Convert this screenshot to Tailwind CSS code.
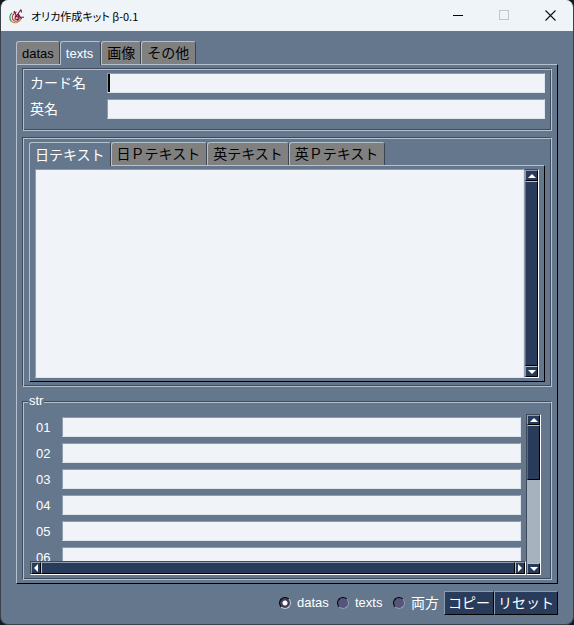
<!DOCTYPE html>
<html lang="ja">
<head>
<meta charset="utf-8">
<title>オリカ作成キット β-0.1</title>
<script src="https://cdn.jsdelivr.net/npm/@tailwindcss/browser@4"></script>
</head>
<body class="bg-[#16181c] font-['Liberation_Sans','Noto_Sans_CJK_JP',sans-serif] text-[13px] leading-5 text-white">
<div class="flex min-h-screen flex-col overflow-hidden rounded-lg border border-t-0 border-[#3c4149] bg-[#64778d]">

  <header class="flex h-[31px] shrink-0 items-center bg-[#eff4f9] pl-2 text-black">
    <svg class="h-4 w-4" viewBox="0 0 16 16" fill="none" aria-hidden="true">
      <path d="M3 5C.5 7 0 11 2.500 13.500" stroke="#3f9a58" stroke-width="1.200"/>
      <path d="M2.500 13.500C6 16 11 14.500 12 10.500" stroke="#c98746" stroke-width="1.100"/>
      <path d="M5.500 5.500C3 7 2.500 10.500 4.500 12.300S10 13 10.500 10" stroke="#b23a3c" stroke-width="1.100"/>
      <path d="M5 3l2.500 5L12 1.500M4.500 5l3-1M6 8.500l9 .8M9 5.500l3.500 5.500M12 1.500l.5 3M6.500 7.500L6 11l3 .5L9.500 7" stroke="#7d1230" stroke-width="1.100"/>
    </svg>
    <h1 class="ml-[6px] flex-1 font-['Noto_Sans_CJK_JP',sans-serif] text-[11px] font-normal [font-feature-settings:'palt']">オリカ作成キット β-0.1</h1>
    <button aria-label="最小化" class="flex h-full w-[46px] items-center justify-center"><svg class="h-[11px] w-[11px]" viewBox="0 0 11 11"><path d="M0 5.500h10" stroke="#000"/></svg></button>
    <button aria-label="最大化" disabled class="flex h-full w-[46px] items-center justify-center"><svg class="h-[11px] w-[11px]" viewBox="0 0 11 11" fill="none"><rect x=".5" y=".5" width="9" height="9" stroke="#c3c7cb"/></svg></button>
    <button aria-label="閉じる" class="flex h-full w-[46px] items-center justify-center"><svg class="h-[11px] w-[11px]" viewBox="0 0 11 11"><path d="M.5.5l10 10M10.500.5l-10 10" stroke="#111" stroke-width="1.100"/></svg></button>
  </header>

  <main class="flex flex-1 flex-col px-[15px] pt-[10px] pb-[9px]">
    <nav role="tablist" class="flex h-[23px]">
      <button role="tab" class="rounded-t-[3px] border-t border-r border-l border-t-[#b5c1cf] border-r-[#3a4554] border-l-[#b5c1cf] bg-[#808080] px-[5px] pt-[2px] text-black">datas</button>
      <button role="tab" aria-selected="true" class="relative -mb-px rounded-t-[3px] border-t border-r border-l border-t-[#b5c1cf] border-r-[#3a4554] border-l-[#b5c1cf] bg-[#64778d] pr-[7px] pl-[5px]">texts</button>
      <button role="tab" class="rounded-t-[3px] border-t border-r border-l border-t-[#b5c1cf] border-r-[#3a4554] border-l-[#b5c1cf] bg-[#808080] pr-[5px] pl-[5px] text-[14px] text-black">画像</button>
      <button role="tab" class="rounded-t-[3px] border-t border-r border-l border-t-[#b5c1cf] border-r-[#3a4554] border-l-[#b5c1cf] bg-[#808080] pr-[6px] pl-[5px] text-[14px] text-black">その他</button>
    </nav>

    <section role="tabpanel" class="flex flex-1 flex-col border border-t-[#b5c1cf] border-r-black border-b-black border-l-[#b5c1cf] px-[5px] pt-[3px] pb-[3px]">
      <div class="flex flex-col gap-[6px] border border-t-[#3f4b5b] border-r-[#b5c1cf] border-b-[#b5c1cf] border-l-[#3f4b5b] pt-1 pr-[6px] pb-[11px] pl-[7px] shadow-[inset_1px_1px_#b5c1cf,inset_-1px_-1px_#3f4b5b]">
        <div class="flex h-5 items-center">
          <label for="card" class="w-[77px] text-[14px]">カード名</label>
          <input id="card" autofocus class="h-5 min-w-0 flex-1 border border-t-[#8f9cac] border-r-[#dfe5ec] border-b-[#dfe5ec] border-l-[#8f9cac] bg-[#f0f3f7] text-black caret-transparent shadow-[inset_2px_0_#000] outline-none">
        </div>
        <div class="flex h-5 items-center">
          <label for="eng" class="w-[77px] text-[14px]">英名</label>
          <input id="eng" class="h-5 min-w-0 flex-1 border border-t-[#8f9cac] border-r-[#dfe5ec] border-b-[#dfe5ec] border-l-[#8f9cac] bg-[#f0f3f7] text-black outline-none">
        </div>
      </div>

      <div class="mt-[6px] flex flex-1 flex-col border border-t-[#3f4b5b] border-r-[#b5c1cf] border-b-[#b5c1cf] border-l-[#3f4b5b] px-[6px] pt-1 pb-1 shadow-[inset_1px_1px_#b5c1cf,inset_-1px_-1px_#3f4b5b]">
        <nav role="tablist" class="flex h-[23px] text-[14px]">
          <button role="tab" aria-selected="true" class="relative -mb-px rounded-t-[3px] border-t border-r border-l border-t-[#b5c1cf] border-r-[#3a4554] border-l-[#b5c1cf] bg-[#64778d] px-[5px]">日テキスト</button>
          <button role="tab" class="rounded-t-[3px] border-t border-r border-l border-t-[#b5c1cf] border-r-[#3a4554] border-l-[#b5c1cf] bg-[#808080] pr-[6px] pl-[5px] text-black">日Ｐテキスト</button>
          <button role="tab" class="rounded-t-[3px] border-t border-r border-l border-t-[#b5c1cf] border-r-[#3a4554] border-l-[#b5c1cf] bg-[#808080] px-[5px] text-black">英テキスト</button>
          <button role="tab" class="rounded-t-[3px] border-t border-r border-l border-t-[#b5c1cf] border-r-[#3a4554] border-l-[#b5c1cf] bg-[#808080] pr-[6px] pl-[5px] text-black">英Ｐテキスト</button>
        </nav>
        <div role="tabpanel" class="flex flex-1 border border-t-[#b5c1cf] border-r-black border-b-black border-l-[#b5c1cf] p-[5px] pt-[3px] pb-[3px]">
          <textarea aria-label="日テキスト" class="min-h-[120px] min-w-0 flex-1 resize-none border border-t-[#8f9cac] border-r-[#dfe5ec] border-b-[#dfe5ec] border-l-[#8f9cac] bg-[#f0f3f7] text-black outline-none"></textarea>
          <div class="flex w-[15px] flex-col border border-t-[#3f4b5b] border-r-white border-b-white border-l-[#8f9cac] bg-[#283b5b]">
            <button aria-label="上へ" class="flex h-[11px] items-center justify-center border border-t-[#8f9cac] border-r-black border-b-black border-l-[#8f9cac]"><svg class="h-1 w-2" viewBox="0 0 8 4"><path d="M0 4L4 0l4 4z" fill="#fff"/></svg></button>
            <div class="flex-1 border border-t-[#b5c1cf] border-r-black border-b-black border-l-[#5a6b82]"></div>
            <button aria-label="下へ" class="flex h-[11px] items-center justify-center border border-t-[#b5c1cf] border-r-black border-b-black border-l-[#8f9cac]"><svg class="h-1 w-2" viewBox="0 0 8 4"><path d="M0 0h8L4 4z" fill="#fff"/></svg></button>
          </div>
        </div>
      </div>

      <fieldset class="mt-[6px] min-w-0 border border-t-[#3f4b5b] border-r-[#b5c1cf] border-b-[#b5c1cf] border-l-[#3f4b5b] pr-[10px] pb-1 pl-[7px] shadow-[inset_1px_1px_#b5c1cf,inset_-1px_-1px_#3f4b5b]">
        <legend class="-ml-[2px] bg-[#64778d] px-px leading-4">str</legend>
        <div class="flex pt-[5px]">
          <div class="flex min-w-0 flex-1 flex-col">
            <div class="flex h-[147px] flex-col gap-[6px] overflow-hidden pt-[3px] pr-[5px] pl-[6px]">
              <div class="flex h-5 shrink-0 items-center"><label for="s1" class="w-[26px] pt-px">01</label><input id="s1" class="h-5 min-w-0 flex-1 border border-t-[#8f9cac] border-r-[#dfe5ec] border-b-[#dfe5ec] border-l-[#8f9cac] bg-[#f0f3f7] text-black outline-none"></div>
              <div class="flex h-5 shrink-0 items-center"><label for="s2" class="w-[26px] pt-px">02</label><input id="s2" class="h-5 min-w-0 flex-1 border border-t-[#8f9cac] border-r-[#dfe5ec] border-b-[#dfe5ec] border-l-[#8f9cac] bg-[#f0f3f7] text-black outline-none"></div>
              <div class="flex h-5 shrink-0 items-center"><label for="s3" class="w-[26px] pt-px">03</label><input id="s3" class="h-5 min-w-0 flex-1 border border-t-[#8f9cac] border-r-[#dfe5ec] border-b-[#dfe5ec] border-l-[#8f9cac] bg-[#f0f3f7] text-black outline-none"></div>
              <div class="flex h-5 shrink-0 items-center"><label for="s4" class="w-[26px] pt-px">04</label><input id="s4" class="h-5 min-w-0 flex-1 border border-t-[#8f9cac] border-r-[#dfe5ec] border-b-[#dfe5ec] border-l-[#8f9cac] bg-[#f0f3f7] text-black outline-none"></div>
              <div class="flex h-5 shrink-0 items-center"><label for="s5" class="w-[26px] pt-px">05</label><input id="s5" class="h-5 min-w-0 flex-1 border border-t-[#8f9cac] border-r-[#dfe5ec] border-b-[#dfe5ec] border-l-[#8f9cac] bg-[#f0f3f7] text-black outline-none"></div>
              <div class="flex h-5 shrink-0 items-center"><label for="s6" class="w-[26px] pt-px">06</label><input id="s6" class="h-5 min-w-0 flex-1 border border-t-[#8f9cac] border-r-[#dfe5ec] border-b-[#dfe5ec] border-l-[#8f9cac] bg-[#f0f3f7] text-black outline-none"></div>
            </div>
            <div class="flex h-[14px] border border-t-[#3f4b5b] border-r-white border-b-white border-l-[#3f4b5b] bg-[#283b5b]">
              <button aria-label="左へ" class="flex w-[10px] items-center justify-center border border-t-[#8f9cac] border-r-black border-b-black border-l-[#8f9cac]"><svg class="h-2 w-1" viewBox="0 0 4 8"><path d="M4 0v8L0 4z" fill="#fff"/></svg></button>
              <div class="flex-1 border border-t-[#8f9cac] border-r-black border-b-black border-l-[#b5c1cf]"></div>
              <button aria-label="右へ" class="flex w-[10px] items-center justify-center border border-t-[#8f9cac] border-r-black border-b-black border-l-[#b5c1cf]"><svg class="h-2 w-1" viewBox="0 0 4 8"><path d="M0 0v8l4-4z" fill="#fff"/></svg></button>
            </div>
          </div>
          <div class="flex w-[15px] flex-col border border-t-[#3f4b5b] border-r-white border-b-white border-l-[#3f4b5b] bg-[#a6b2be]">
            <button aria-label="上へ" class="flex h-[10px] items-center justify-center border border-t-[#8f9cac] border-r-black border-b-black border-l-[#8f9cac] bg-[#283b5b]"><svg class="h-1 w-2" viewBox="0 0 8 4"><path d="M0 4L4 0l4 4z" fill="#fff"/></svg></button>
            <div class="h-[55px] border border-t-[#b5c1cf] border-r-black border-b-black border-l-[#5a6b82] bg-[#283b5b]"></div>
            <div class="flex-1"></div>
            <button aria-label="下へ" class="flex h-[11px] items-center justify-center border border-t-[#b5c1cf] border-r-black border-b-black border-l-[#8f9cac] bg-[#283b5b]"><svg class="h-1 w-2" viewBox="0 0 8 4"><path d="M0 0h8L4 4z" fill="#fff"/></svg></button>
          </div>
        </div>
      </fieldset>
    </section>

    <footer class="mt-[6px] flex h-[25px] items-center justify-end">
      <label class="mr-2 flex items-center gap-[6px]"><input type="radio" name="target" checked class="h-3 w-3 appearance-none rounded-full border border-t-black border-r-[#c3ccd6] border-b-[#c3ccd6] border-l-black bg-[radial-gradient(circle,#fff_0_2px,#413d57_3px)]"><span class="w-8 pt-px">datas</span></label>
      <label class="mr-2 flex items-center gap-[6px]"><input type="radio" name="target" class="h-3 w-3 appearance-none rounded-full border border-t-black border-r-[#8f9cac] border-b-[#8f9cac] border-l-black bg-[#57547b]"><span class="w-[30px] pt-px">texts</span></label>
      <label class="mr-[5px] flex items-center gap-[6px] text-[14px]"><input type="radio" name="target" class="h-3 w-3 appearance-none rounded-full border border-t-black border-r-[#8f9cac] border-b-[#8f9cac] border-l-black bg-[#57547b]">両方</label>
      <button class="h-6 border border-t-[#8f9cac] border-r-black border-b-black border-l-[#8f9cac] bg-[#283b5b] px-[3px] text-[14px]">コピー</button>
      <button class="h-6 border border-t-[#8f9cac] border-r-black border-b-black border-l-[#8f9cac] bg-[#283b5b] px-[3px] text-[14px]">リセット</button>
    </footer>
  </main>
</div>
</body>
</html>
